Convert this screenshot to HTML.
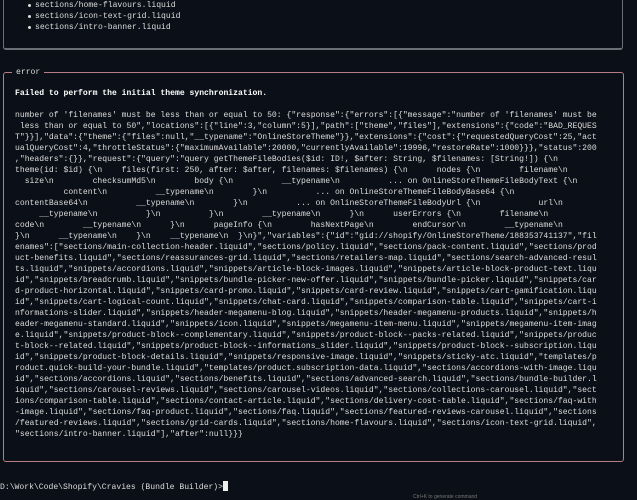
<!DOCTYPE html>
<html><head><meta charset="utf-8"><style>
html,body{margin:0;padding:0;background:#0b0f17;width:637px;height:500px;overflow:hidden}
body{font-family:"Liberation Mono",monospace;font-size:8.08px;color:#dcdcdc;position:relative}
.top{position:absolute;left:3px;top:-10px;width:618px;height:58px;border:1px solid #6a6e75;border-top:none;border-radius:0 0 3px 3px;border-bottom-width:2px}
.top div{position:absolute;left:31px;white-space:pre;line-height:11px}
.top div::before{content:"";position:absolute;left:-7px;top:4px;width:3px;height:3px;border-radius:50%;background:#ddd}
.err{position:absolute;left:3px;top:72px;width:619px;height:388px;border:1px solid #b87c84;border-radius:3px}
.lab{position:absolute;left:8px;top:-6px;background:#0b0f17;padding:0 4px;line-height:11px}
pre{margin:0;font:inherit;position:absolute;left:11px;line-height:11px}
.h{top:15px;font-weight:bold;color:#fff}
.b{top:37px}
.p{position:absolute;left:0;top:481px;white-space:pre;line-height:11px}
.cur{display:inline-block;width:5px;height:10px;background:#eee;vertical-align:-2px}
.k{position:absolute;left:413px;top:494px;font-family:"Liberation Sans",sans-serif;font-size:5px;color:#777}
</style></head><body>
<div class="top">
<div style="top:10px">sections/home-flavours.liquid</div>
<div style="top:21px">sections/icon-text-grid.liquid</div>
<div style="top:32px">sections/intro-banner.liquid</div>
</div>
<div class="err"><span class="lab">error</span>
<pre class="h">Failed to perform the initial theme synchronization.</pre>
<pre class="b">number of 'filenames' must be less than or equal to 50: {"response":{"errors":[{"message":"number of 'filenames' must be
 less than or equal to 50","locations":[{"line":3,"column":5}],"path":["theme","files"],"extensions":{"code":"BAD_REQUES
T"}}],"data":{"theme":{"files":null,"__typename":"OnlineStoreTheme"}},"extensions":{"cost":{"requestedQueryCost":25,"act
ualQueryCost":4,"throttleStatus":{"maximumAvailable":20000,"currentlyAvailable":19996,"restoreRate":1000}}},"status":200
,"headers":{}},"request":{"query":"query getThemeFileBodies($id: ID!, $after: String, $filenames: [String!]) {\n
theme(id: $id) {\n    files(first: 250, after: $after, filenames: $filenames) {\n      nodes {\n        filename\n
  size\n        checksumMd5\n        body {\n          __typename\n          ... on OnlineStoreThemeFileBodyText {\n
          content\n          __typename\n        }\n          ... on OnlineStoreThemeFileBodyBase64 {\n
contentBase64\n          __typename\n        }\n          ... on OnlineStoreThemeFileBodyUrl {\n            url\n
     __typename\n          }\n          }\n        __typename\n      }\n      userErrors {\n        filename\n
code\n        __typename\n      }\n      pageInfo {\n        hasNextPage\n        endCursor\n        __typename\n
}\n      __typename\n    }\n    __typename\n  }\n}","variables":{"id":"gid://shopify/OnlineStoreTheme/188353741137","fil
enames":["sections/main-collection-header.liquid","sections/policy.liquid","sections/pack-content.liquid","sections/prod
uct-benefits.liquid","sections/reassurances-grid.liquid","sections/retailers-map.liquid","sections/search-advanced-resul
ts.liquid","snippets/accordions.liquid","snippets/article-block-images.liquid","snippets/article-block-product-text.liqu
id","snippets/breadcrumb.liquid","snippets/bundle-picker-new-offer.liquid","snippets/bundle-picker.liquid","snippets/car
d-product-horizontal.liquid","snippets/card-promo.liquid","snippets/card-review.liquid","snippets/cart-gamification.liqu
id","snippets/cart-logical-count.liquid","snippets/chat-card.liquid","snippets/comparison-table.liquid","snippets/cart-i
nformations-slider.liquid","snippets/header-megamenu-blog.liquid","snippets/header-megamenu-products.liquid","snippets/h
eader-megamenu-standard.liquid","snippets/icon.liquid","snippets/megamenu-item-menu.liquid","snippets/megamenu-item-imag
e.liquid","snippets/product-block--complementary.liquid","snippets/product-block--packs-related.liquid","snippets/produc
t-block--related.liquid","snippets/product-block--informations_slider.liquid","snippets/product-block--subscription.liqu
id","snippets/product-block-details.liquid","snippets/responsive-image.liquid","snippets/sticky-atc.liquid","templates/p
roduct.quick-build-your-bundle.liquid","templates/product.subscription-data.liquid","sections/accordions-with-image.liqu
id","sections/accordions.liquid","sections/benefits.liquid","sections/advanced-search.liquid","sections/bundle-builder.l
iquid","sections/carousel-reviews.liquid","sections/carousel-videos.liquid","sections/collections-carousel.liquid","sect
ions/comparison-table.liquid","sections/contact-article.liquid","sections/delivery-cost-table.liquid","sections/faq-with
-image.liquid","sections/faq-product.liquid","sections/faq.liquid","sections/featured-reviews-carousel.liquid","sections
/featured-reviews.liquid","sections/grid-cards.liquid","sections/home-flavours.liquid","sections/icon-text-grid.liquid",
"sections/intro-banner.liquid"],"after":null}}}</pre>
</div>
<div class="p">D:\Work\Code\Shopify\Cravies (Bundle Builder)&gt;<span class="cur"></span></div>
<div class="k">Ctrl+K to generate command</div>
</body></html>
